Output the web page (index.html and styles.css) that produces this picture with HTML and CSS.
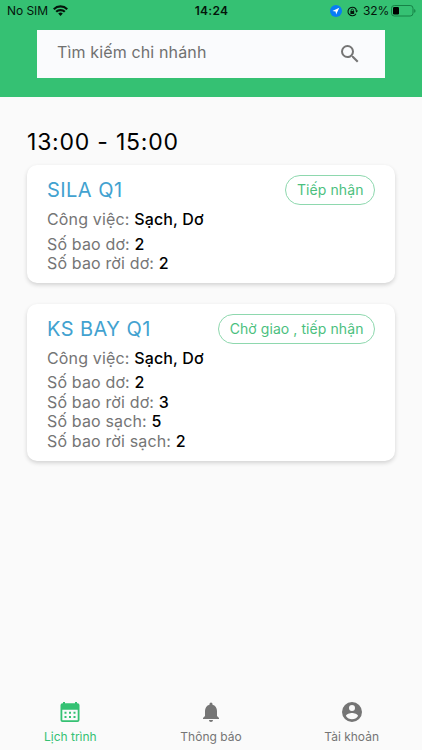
FILE: index.html
```
<!DOCTYPE html>
<html lang="vi">
<head>
<meta charset="utf-8">
<meta name="viewport" content="width=device-width, initial-scale=1">
<title>Lịch trình</title>
<link rel="stylesheet" href="styles.css">
</head>
<body>
<div class="app">
  <header class="header">
    <div class="status">
      <div class="status-left">
        <span class="carrier">No SIM</span>
        <svg class="wifi" viewBox="0 0 15 11"><g fill="none" stroke="#04150b" stroke-width="2.200"><path d="M.8 4.200a9.500 9.500 0 0 1 13.400 0"/><path d="M3.200 6.800a6.100 6.100 0 0 1 8.600 0"/></g><path fill="#04150b" d="M7.500 11 5.200 8.600a3.300 3.300 0 0 1 4.600 0z"/></svg>
      </div>
      <span class="clock">14:24</span>
      <div class="status-right">
        <svg class="location" viewBox="0 0 12 12"><circle cx="6" cy="6" r="6" fill="#087cf5"/><path fill="#fff" d="M9.300 2.700 2.400 5.900l3.200.5.5 3.200z"/></svg>
        <svg class="lock" viewBox="0 0 11 11"><path d="M9 7.700A4.300 4.300 0 1 1 9.500 4.600" fill="none" stroke="#04150b" stroke-width="1.100"/><path fill="#04150b" d="M3.400 5h3.800v2.900H3.400zM8.200 4.600H11L9.600 6.700z"/><path d="M4.200 5.100V4.200a1.100 1.100 0 0 1 2.200 0v.9" fill="none" stroke="#04150b" stroke-width=".8"/></svg>
        <span class="percent">32%</span>
        <svg class="battery" viewBox="0 0 25 12"><rect x=".5" y=".5" width="21.500" height="10.500" rx="2.800" fill="none" stroke="#168247"/><rect x="2" y="2" width="6" height="7.500" rx="1.300" fill="#000"/><path fill="#168247" d="M23.200 4v3.800q1.300-.5 1.300-1.900T23.200 4z"/></svg>
      </div>
    </div>
    <div class="search">
      <span class="placeholder">Tìm kiếm chi nhánh</span>
      <svg class="search-icon" viewBox="0 0 24 24"><path fill="#757575" d="M15.500 14h-.79l-.28-.27A6.470 6.470 0 0 0 16 9.500 6.500 6.500 0 1 0 9.500 16c1.610 0 3.090-.59 4.230-1.570l.27.28v.79l5 4.990L20.490 19l-4.990-5zm-6 0C7.010 14 5 11.990 5 9.500S7.010 5 9.500 5 14 7.010 14 9.500 11.990 14 9.500 14z"/></svg>
    </div>
  </header>
  <main class="content">
    <h1 class="slot">13:00 - 15:00</h1>
    <section class="card">
      <div class="card-head"><h2 class="name">SILA Q1</h2><span class="badge">Tiếp nhận</span></div>
      <p class="line job">Công việc: <b>Sạch, Dơ</b></p>
      <p class="line">Số bao dơ: <b>2</b></p>
      <p class="line">Số bao rời dơ: <b>2</b></p>
    </section>
    <section class="card">
      <div class="card-head"><h2 class="name">KS BAY Q1</h2><span class="badge">Chờ giao , tiếp nhận</span></div>
      <p class="line job">Công việc: <b>Sạch, Dơ</b></p>
      <p class="line">Số bao dơ: <b>2</b></p>
      <p class="line">Số bao rời dơ: <b>3</b></p>
      <p class="line">Số bao sạch: <b>5</b></p>
      <p class="line">Số bao rời sạch: <b>2</b></p>
    </section>
  </main>
  <nav class="tabs">
    <div class="tab active">
      <svg class="tab-icon" viewBox="0 0 24 24"><path fill="currentColor" fill-rule="evenodd" d="M5 3.200V2h2v1.200h10V2h2v1.200h.5a2 2 0 0 1 2 2V20a2 2 0 0 1-2 2h-15a2 2 0 0 1-2-2V5.200a2 2 0 0 1 2-2zm-.7 6.500v10.500h15.400V9.700zM6.500 11.700h2v2h-2zm4.500 0h2v2h-2zm4.500 0h2v2h-2zm-9 4.300h2v2h-2zm4.500 0h2v2h-2zm4.500 0h2v2h-2z"/></svg>
      <span>Lịch trình</span>
    </div>
    <div class="tab">
      <svg class="tab-icon" viewBox="0 0 24 24"><path fill="currentColor" d="M12 22c1.100 0 2-.9 2-2h-4c0 1.100.89 2 2 2zm6-6v-5c0-3.070-1.640-5.640-4.500-6.320V4a1.500 1.500 0 0 0-3 0v.68C7.630 5.360 6 7.920 6 11v5l-2 2v1h16v-1l-2-2z"/></svg>
      <span>Thông báo</span>
    </div>
    <div class="tab">
      <svg class="tab-icon" viewBox="0 0 24 24"><path fill="currentColor" d="M12 2a10 10 0 1 0 0 20 10 10 0 0 0 0-20zm0 3a3 3 0 1 1 0 6 3 3 0 0 1 0-6zm0 14.200a7.200 7.200 0 0 1-6-3.220c.03-1.990 4-3.080 6-3.080s5.970 1.090 6 3.080a7.200 7.200 0 0 1-6 3.220z"/></svg>
      <span>Tài khoản</span>
    </div>
  </nav>
</div>
</body>
</html>
```
FILE: styles.css
```
* { box-sizing: border-box; }
body { margin: 0; font-family: Inter, "Noto Sans", sans-serif; color: #000; background: #fafafa; }
h1, h2, p { margin: 0; font-weight: 400; }
svg { display: block; flex: none; }
.app { display: flex; flex-direction: column; height: 750px; overflow: hidden; }
.header { height: 97px; flex: none; background: #35c173; }
.status { display: grid; grid-template-columns: 1fr auto 1fr; align-items: center; height: 22px; margin-bottom: 8px; padding: 0 6px 0 7px; color: #04150b; font-size: 12px; line-height: 22px; }
.status-left, .status-right { display: flex; align-items: center; }
.status-right { justify-content: flex-end; }
.carrier { letter-spacing: -.05px; }
.wifi { width: 15px; height: 11px; margin: 0 0 2px 5px; }
.clock { font-weight: 600; letter-spacing: .3px; }
.location { width: 12px; height: 12px; margin-right: 5px; }
.lock { width: 11px; height: 11px; margin-right: 5px; }
.percent { letter-spacing: -.2px; }
.battery { width: 25px; height: 12px; margin-left: 2px; }
.search { display: flex; align-items: center; justify-content: space-between; width: 348px; height: 48px; margin-left: 37px; padding: 0 23px 0 20px; background: #fafbfd; color: #707070; }
.placeholder { font-size: 16px; line-height: 20px; margin-bottom: 4px; letter-spacing: .14px; }
.search-icon { width: 24px; height: 24px; }
.content { flex: 1; padding: 30px 27px 0; }
.slot { height: 38px; font-size: 23px; line-height: 30px; letter-spacing: .78px; }
.card { width: 368px; margin-bottom: 20.4px; padding: 10.4px 20px 9.6px; border-radius: 10px; background: #fff; box-shadow: 0 2px 4px rgba(0, 0, 0, .16); }
.card-head { display: flex; align-items: center; justify-content: space-between; height: 30px; margin-bottom: 5px; }
.name { color: #42a2d0; font-size: 20px; line-height: 30px; letter-spacing: .45px; }
.badge { height: 30px; padding: 0 10.5px; border: 1px solid #8ed8ae; border-radius: 15px; color: #4bbf7e; font-size: 14px; line-height: 28px; letter-spacing: .08px; white-space: nowrap; }
.line { color: #757575; font-size: 16px; line-height: 19.4px; letter-spacing: .15px; }
.line b { color: #000; font-weight: 500; }
.job { margin-bottom: 5px; }
.tabs { display: grid; grid-template-columns: repeat(3, 1fr); height: 53px; padding-top: 3px; color: #757575; }
.tab { display: flex; flex-direction: column; align-items: center; font-size: 12px; line-height: 16px; }
.tab-icon { width: 24px; height: 24px; margin-bottom: 5px; }
.active { color: #35c173; }
```
